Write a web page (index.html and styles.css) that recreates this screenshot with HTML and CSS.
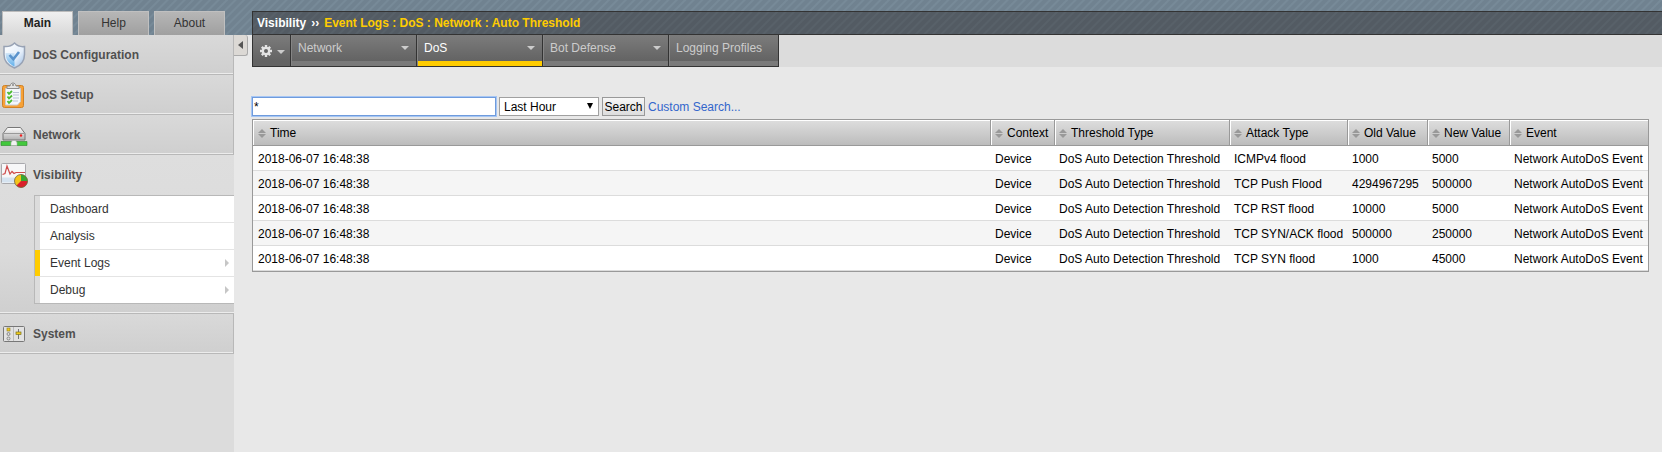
FILE: index.html
```html
<!DOCTYPE html>
<html lang="en">
<head>
<meta charset="utf-8">
<title>Event Logs : DoS : Network : Auto Threshold</title>
<link rel="stylesheet" href="styles.css">
</head>
<body>
<div class="app">
  <aside class="sidebar">
    <nav class="tabs" aria-label="Panels">
      <a href="#" class="tab tab-active">Main</a>
      <a href="#" class="tab">Help</a>
      <a href="#" class="tab">About</a>
    </nav>
    <nav class="menu" aria-label="Main menu">
      <a href="#" class="section">
        <svg class="icon" viewBox="0 0 28 28" width="28" height="28"><defs><linearGradient id="sh" x1="0" y1="0" x2="1" y2="1"><stop offset="0" stop-color="#fff"/><stop offset=".6" stop-color="#e4eefa"/><stop offset="1" stop-color="#8fb4de"/></linearGradient><linearGradient id="sb" x1="0" y1="0" x2="0" y2="1"><stop offset="0" stop-color="#d3e6f7"/><stop offset="1" stop-color="#5fb0ec"/></linearGradient></defs><path d="M14.500 2C12 4.500 8 6 4 5.500v8c0 6.500 4 11 10.500 13.500C21 24.500 24.500 20 24.500 13.500v-8C21 6 17 4.500 14.500 2z" fill="url(#sh)" stroke="#98a2b4" stroke-width="1.500"/><path d="M5.500 12c0 7 3.500 11 9 13.500V12z" fill="url(#sb)"/><path d="M9.500 14l3.800 4.200 5.700-7.200" fill="none" stroke="#5b93cc" stroke-width="2.600"/></svg>
        <span>DoS Configuration</span></a>
      <a href="#" class="section">
        <svg class="icon" viewBox="0 0 28 28" width="28" height="28"><rect x="2.500" y="4.500" width="21" height="22" rx="2" fill="#f7a136" stroke="#cf8126"/><path d="M5.500 7.500h15v13l-3 3.500h-12z" fill="#f4f7fb" stroke="#c9cdd4"/><path d="M7 7.500V5h3c.5-4 5.500-4 6 0h3v2.500z" fill="#e4e4e4" stroke="#8d8d8d"/><circle cx="13" cy="4" r="1" fill="#888"/><path d="M7.500 11l1.500 2 3-3M7.500 15.500l1.500 2 3-3M7.500 20l1.500 2 3-3" fill="none" stroke="#4dbb32" stroke-width="1.800"/><path d="M13 11.500h6M13 14h6M13 17h6M13 20h5" stroke="#b9c3d6"/></svg>
        <span>DoS Setup</span></a>
      <a href="#" class="section">
        <svg class="icon" viewBox="0 0 28 28" width="28" height="28"><defs><linearGradient id="dr" x1="0" y1="0" x2="0" y2="1"><stop offset="0" stop-color="#fff"/><stop offset="1" stop-color="#b0b0b0"/></linearGradient></defs><path d="M3 12.500l4.500-6h13l4.500 6v6.500H3z" fill="url(#dr)" stroke="#777" stroke-linejoin="round"/><path d="M3.500 12.500h21" stroke="#999"/><circle cx="21" cy="14.500" r="1.200" fill="#e22"/><path d="M1 20.500h26v4H1z" fill="#42c83c" stroke="#2a8828" stroke-width=".6"/><path d="M11 24.500v-3l1.500-2h3l1.500 2v3z" fill="#f2f2f2" stroke="#aaa" stroke-width=".6"/></svg>
        <span>Network</span></a>
      <div class="section-open">
        <a href="#" class="section section-current">
          <svg class="icon" viewBox="0 0 28 28" width="28" height="28"><rect x="1.500" y="2.500" width="24" height="20" rx="1" fill="#f7f7f8" stroke="#a9a9ad"/><path d="M2 16.500h23v5H2z" fill="#d5e3f0"/><path d="M2.500 13.500L5 12.500 7 5l3 8 2-2.500 2 2 2-1h9" fill="none" stroke="#cf4b4b" stroke-width="1.200"/><circle cx="21" cy="20" r="6.500" fill="#f3c41c"/><path d="M21 20v-6.500a6.500 6.500 0 0 1 6.500 6.500z" fill="#38a832"/><path d="M21 20h6.500a6.500 6.500 0 0 1-11 4.600z" fill="#d9202b"/><circle cx="21" cy="20" r="6.500" fill="none" stroke="#6b6340" stroke-width=".8"/></svg>
          <span>Visibility</span></a>
        <ul class="submenu">
          <li><a href="#" class="sub">Dashboard</a></li>
          <li><a href="#" class="sub">Analysis</a></li>
          <li><a href="#" class="sub sub-active">Event Logs<i class="sub-arrow"></i></a></li>
          <li><a href="#" class="sub">Debug<i class="sub-arrow"></i></a></li>
        </ul>
      </div>
      <a href="#" class="section">
        <svg class="icon" viewBox="0 0 28 28" width="28" height="28"><rect x="3.500" y="6.500" width="21" height="15" rx="1" fill="#e2e2e2" stroke="#777"/><path d="M13.500 7v14" stroke="#bbb"/><rect x="7" y="8" width="3" height="3" fill="#f3cd1c" stroke="#8a7a20" stroke-width=".6"/><circle cx="8.500" cy="14" r="1.500" fill="#ddd" stroke="#777" stroke-width=".8"/><circle cx="8.500" cy="18.500" r="1.500" fill="#ddd" stroke="#777" stroke-width=".8"/><path d="M18.500 9v10" stroke="#777"/><rect x="16" y="12" width="5" height="2.500" fill="#f3cd1c" stroke="#77701c" stroke-width=".7"/></svg>
        <span>System</span></a>
    </nav>
  </aside>
  <div class="gutter"><button class="collapse" aria-label="Collapse menu"></button></div>
  <main class="main">
    <h1 class="title"><span>Visibility</span><span class="sep">››</span><span class="crumb">Event Logs : DoS : Network : Auto Threshold</span></h1>
    <nav class="bar" aria-label="Event log sections">
      <a href="#" class="item item-gear" aria-label="Options"><svg viewBox="0 0 14 14" width="14" height="14"><g stroke="#e4e4e4" stroke-width="2.400"><path d="M7 1v12M1 7h12M2.800 2.800l8.400 8.400M11.200 2.800l-8.400 8.400"/></g><circle cx="7" cy="7" r="4.300" fill="#e4e4e4"/><circle cx="7" cy="7" r="2" fill="#666"/></svg><i class="caret"></i></a>
      <a href="#" class="item item-wide">Network<i class="caret"></i></a>
      <a href="#" class="item item-wide item-active">DoS<i class="caret"></i></a>
      <a href="#" class="item item-wide">Bot Defense<i class="caret"></i></a>
      <a href="#" class="item item-last">Logging Profiles</a>
    </nav>
    <div class="content">
      <form class="search">
        <input class="query" type="text" value="*" aria-label="Search query">
        <span class="pick"><select class="range" aria-label="Time range"><option>Last Hour</option></select></span>
        <button class="go" type="button">Search</button>
        <a href="#" class="custom">Custom Search...</a>
      </form>
      <table class="log">
        <colgroup><col><col class="c-context"><col class="c-threshold"><col class="c-attack"><col class="c-old"><col class="c-new"><col class="c-event"></colgroup>
        <thead><tr><th><i class="sort"></i>Time</th><th><i class="sort"></i>Context</th><th><i class="sort"></i>Threshold Type</th><th><i class="sort"></i>Attack Type</th><th><i class="sort"></i>Old Value</th><th><i class="sort"></i>New Value</th><th><i class="sort"></i>Event</th></tr></thead>
        <tbody>
          <tr><td>2018-06-07 16:48:38</td><td>Device</td><td>DoS Auto Detection Threshold</td><td>ICMPv4 flood</td><td>1000</td><td>5000</td><td>Network AutoDoS Event</td></tr>
          <tr><td>2018-06-07 16:48:38</td><td>Device</td><td>DoS Auto Detection Threshold</td><td>TCP Push Flood</td><td>4294967295</td><td>500000</td><td>Network AutoDoS Event</td></tr>
          <tr><td>2018-06-07 16:48:38</td><td>Device</td><td>DoS Auto Detection Threshold</td><td>TCP RST flood</td><td>10000</td><td>5000</td><td>Network AutoDoS Event</td></tr>
          <tr><td>2018-06-07 16:48:38</td><td>Device</td><td>DoS Auto Detection Threshold</td><td>TCP SYN/ACK flood</td><td>500000</td><td>250000</td><td>Network AutoDoS Event</td></tr>
          <tr><td>2018-06-07 16:48:38</td><td>Device</td><td>DoS Auto Detection Threshold</td><td>TCP SYN flood</td><td>1000</td><td>45000</td><td>Network AutoDoS Event</td></tr>
        </tbody>
      </table>
    </div>
  </main>
</div>
</body>
</html>
```
FILE: styles.css
```css
* { box-sizing: border-box; }
body { margin: 0; background: #e8e8e8; color: #000; font: 12px/16px "Liberation Sans", Arial, sans-serif; }
a { text-decoration: none; color: inherit; }

.app {
  display: flex;
  min-height: 100vh;
  background: repeating-linear-gradient(135deg, #708290 0 3px, #778a98 4px 5px, #708290 6px) top / 100% 35px no-repeat;
}

/* Sidebar */
.sidebar { flex: none; display: flex; flex-direction: column; width: 234px; }
.tabs { display: flex; gap: 5px; height: 35px; padding: 11px 0 0 2px; }
.tab {
  width: 71px; padding: 3px 0; border: 1px solid #c0c0c0; border-bottom: 0;
  background: linear-gradient(#b6b6b6, #a0a0a0); color: #333; text-align: center;
}
.tab-active { background: linear-gradient(#f0f0f0, #d9d9d9); border-color: #bbb; font-weight: bold; color: #222; }
.menu { flex: 1; background: #dcdcdc; }
.section {
  display: flex; align-items: center; gap: 5px; height: 40px;
  border-right: 1px solid #b8b8b8; border-bottom: 1px solid #b8b8b8;
  background: linear-gradient(#d9d9d9, #cfcfcf); box-shadow: inset 0 -1px #ececec;
  color: #505050; font-weight: bold;
}
.icon { flex: none; }
.section-current { border: 0; background: none; box-shadow: none; }
.section-open {
  padding-bottom: 9px; border-bottom: 1px solid #b8b8b8;
  background: linear-gradient(#dedede, #dbdbdb 60%, #cfcfcf); box-shadow: inset 0 -1px #ececec;
}
.submenu { margin: 0 0 0 34px; padding: 0 0 0 5px; border: 1px solid #b8b8b8; border-right: 0; background: #dcdcdc; list-style: none; }
.submenu li + li { border-top: 1px solid #e4e4e4; }
.sub { display: flex; align-items: center; justify-content: space-between; height: 26px; padding: 0 5px 0 10px; background: #fff; color: #333; }
.sub-active { margin-left: -5px; border-left: 5px solid #fc0; }
.sub-arrow { border: 4px solid transparent; border-left-color: #c6c6c6; border-right: 0; }

.gutter { flex: none; width: 18px; padding-top: 35px; }
.collapse { display: flex; align-items: center; justify-content: center; width: 14px; height: 21px; padding: 0; border: 1px solid #aaa; border-left: 0; border-top: 0; border-radius: 0 3px 3px 0; background: #dcd9d5; }
.collapse::before { content: ""; border: 4px solid transparent; border-right: 5px solid #555; border-left: 0; }

/* Page header */
.main { flex: 1; min-width: 0; padding-top: 11px; }
.title {
  display: flex; align-items: center; gap: 5px; height: 24px; margin: 0; padding-left: 4px;
  border: 1px solid #333; border-right: 0; font-size: 12px; line-height: 16px; color: #fff;
  background: repeating-linear-gradient(135deg, #535b63 0 3px, #586169 4px 5px, #535b63 6px);
}
.crumb { color: #fc0; }
.bar { display: flex; height: 32px; background: #dcdcdc; }
.item {
  display: flex; justify-content: space-between; padding: 5px 7px;
  border-right: 1px solid #333; border-bottom: 1px solid #333;
  box-shadow: inset 1px 0 #858585, inset 0 -5px #7a7a7a;
  background: linear-gradient(#7c7c7c, #636363 26px); color: #ccc;
}
.item-gear { width: 39px; align-items: center; border-left: 1px solid #333; box-shadow: none; padding: 4px 5px 4px 6px; }
.item-wide { width: 126px; }
.item-last { width: 110px; }
.item-active { color: #fff; box-shadow: inset 1px 0 #858585, inset 0 -5px #fc0; }
.caret { margin-top: 6px; border: 4px solid transparent; border-top-color: #ccc; border-bottom: 0; height: 4px; }
.item-gear .caret { margin-top: 3px; }

/* Search row and log table */
.content { padding: 30px 13px 20px 0; }
.search { display: flex; gap: 3px; height: 22px; }
.query, .range, .go { height: 19px; font: inherit; color: #000; }
.query { width: 244px; padding: 0 1px; border: 1px solid #6f9bdc; background: #fff; box-shadow: 0 0 0 1px #a6c6f4; }
.pick { position: relative; height: 19px; }
.pick::after { content: ""; position: absolute; top: 6px; right: 6px; border: 3px solid transparent; border-top: 6px solid #000; border-bottom: 0; pointer-events: none; }
.range { width: 100px; padding: 0 4px; border: 1px solid #a0a0a0; border-radius: 0; background: #fff; appearance: none; }
.go { width: 43px; padding: 0; border: 1px solid #999; background: linear-gradient(#f6f6f6, #ddd); }
.custom { padding-top: 2px; color: #36c; }
.log { width: 100%; table-layout: fixed; border-collapse: separate; border-spacing: 0; border: 1px solid #999; background: #fff; }
.c-context { width: 64px; }
.c-threshold { width: 175px; }
.c-attack { width: 118px; }
.c-old { width: 80px; }
.c-new { width: 82px; }
.c-event { width: 139px; }
.log th, .log td { text-align: left; white-space: nowrap; font-weight: normal; }
.log th { height: 26px; padding: 4px; border-bottom: 1px solid #999; background: linear-gradient(#dedede, #bcbcbc); box-shadow: inset 1px 1px #fff; }
.log th + th { border-left: 1px solid #999; }
.log td { height: 25px; padding: 5px 0 3px 5px; border-bottom: 1px solid #dcdcdc; }
.log tbody tr:nth-child(even) { background: #f5f5f5; }
.sort { display: inline-flex; flex-direction: column; gap: 1px; margin-right: 4px; vertical-align: middle; }
.log th:first-child { padding-left: 5px; }
.sort::before, .sort::after { content: ""; border: 4px solid transparent; }
.sort::before { border-top: 0; border-bottom-color: #999; }
.sort::after { border-bottom: 0; border-top-color: #999; }
```
